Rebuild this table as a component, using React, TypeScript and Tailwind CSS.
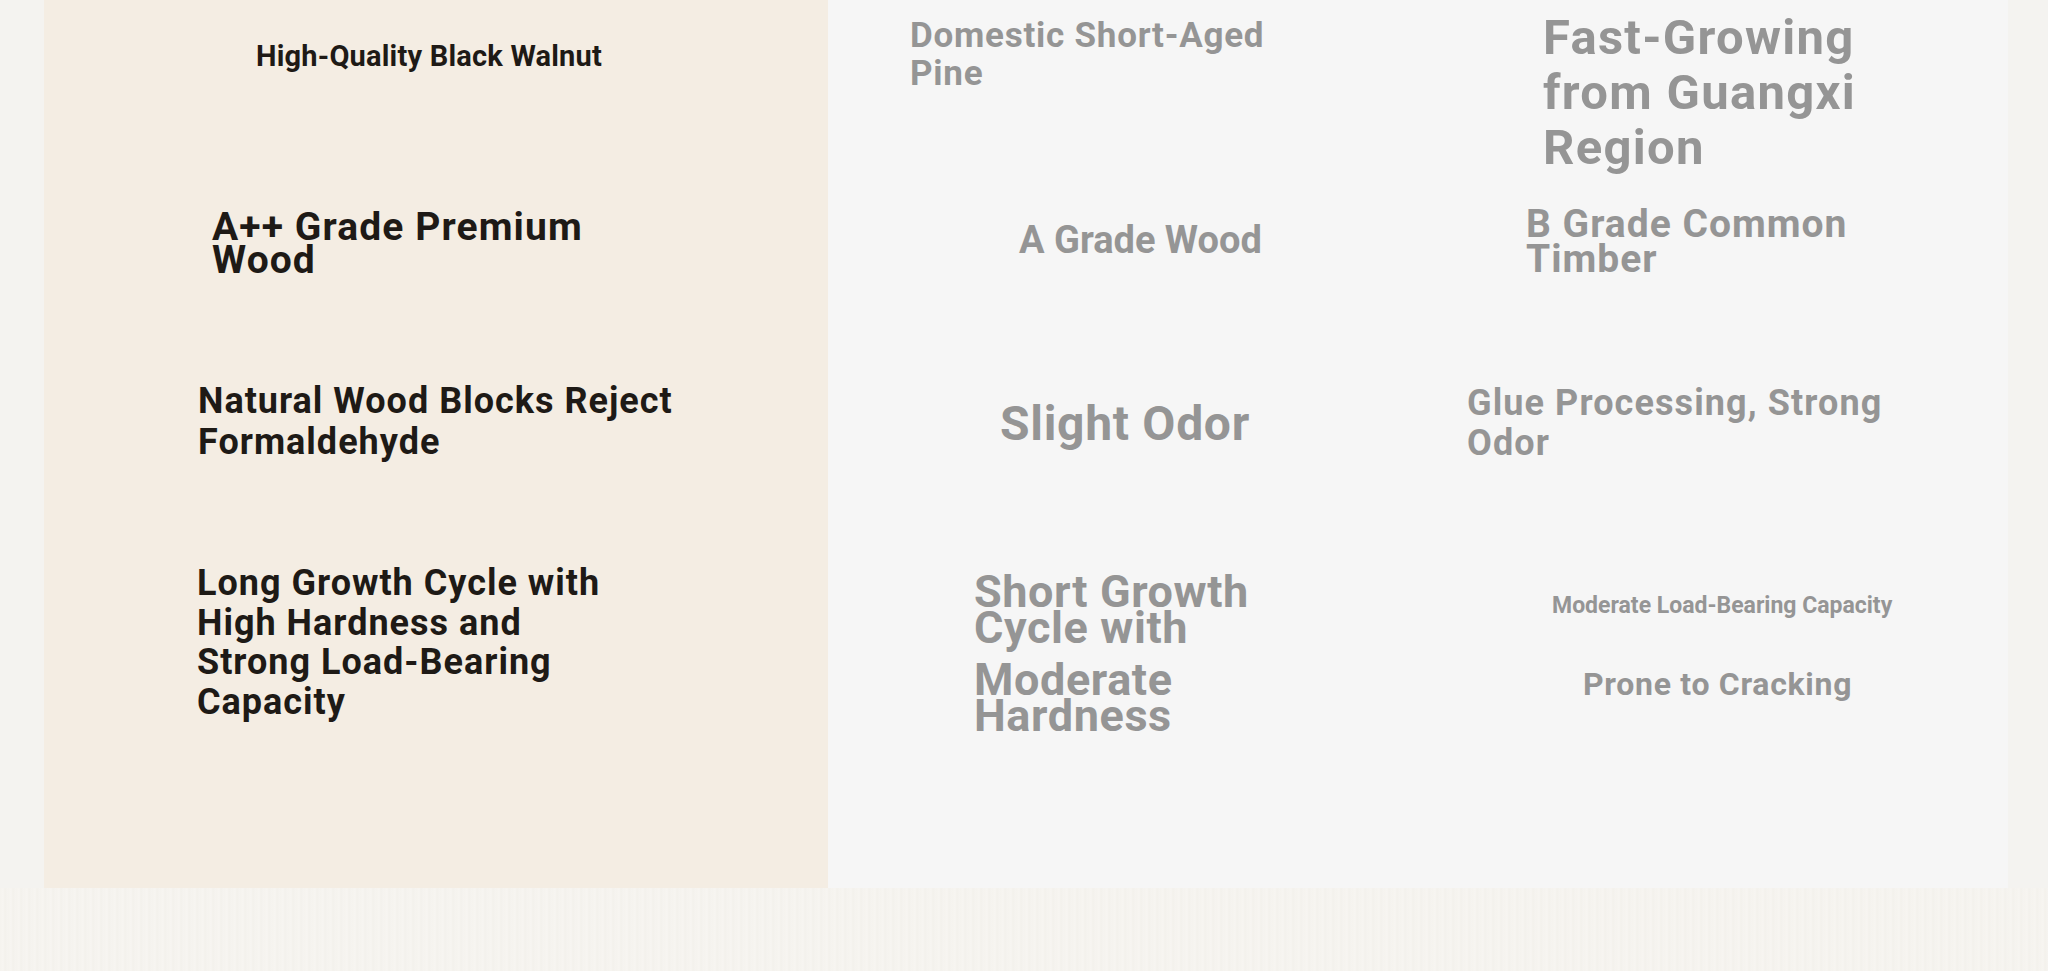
export default function App() {
  return (
    <div className="min-h-[971px] w-full overflow-hidden bg-[#f4f3f0] font-['Roboto',sans-serif] font-bold">
      <div className="ml-[44px] grid h-[888px] w-[1964px] grid-cols-[784px_592px_588px] grid-rows-[185px_145px_190px_368px]">
        {/* Row 1 */}
        <div className="bg-[#f4ede3] pl-[212px] pt-[39px]">
          <p className="text-[29px] leading-[35px] tracking-[0.2px] text-[#1e1a16]">High-Quality Black Walnut</p>
        </div>
        <div className="bg-[#f6f6f6] pl-[82px] pt-[17px]">
          <p className="w-[390px] text-[35px] leading-[38px] tracking-[0.75px] text-[#959595]">Domestic Short-Aged Pine</p>
        </div>
        <div className="bg-[#f6f6f6] pl-[123px] pt-[10px]">
          <p className="w-[340px] text-[49px] leading-[55px] tracking-[1.3px] text-[#959595]">Fast-Growing from Guangxi Region</p>
        </div>

        {/* Row 2 */}
        <div className="bg-[#f4ede3] pl-[168px] pt-[26px]">
          <p className="w-[410px] text-[39px] leading-[33px] tracking-[1.1px] text-[#1e1a16]">A++ Grade Premium Wood</p>
        </div>
        <div className="bg-[#f6f6f6] pl-[191px] pt-[33px]">
          <p className="text-[38px] leading-[1.2] text-[#959595]">A Grade Wood</p>
        </div>
        <div className="bg-[#f6f6f6] pl-[106px] pt-[22px]">
          <p className="w-[360px] text-[39px] leading-[35px] tracking-[1px] text-[#959595]">B Grade Common Timber</p>
        </div>

        {/* Row 3 */}
        <div className="bg-[#f4ede3] pl-[154px] pt-[51px]">
          <p className="w-[510px] text-[36px] leading-[41px] tracking-[1px] text-[#1e1a16]">Natural Wood Blocks Reject Formaldehyde</p>
        </div>
        <div className="bg-[#f6f6f6] pl-[172px] pt-[65px]">
          <p className="text-[48px] leading-[1.2] tracking-[0.7px] text-[#959595]">Slight Odor</p>
        </div>
        <div className="bg-[#f6f6f6] pl-[47px] pt-[53px]">
          <p className="w-[450px] text-[36px] leading-[40px] tracking-[1.1px] text-[#959595]">Glue Processing, Strong Odor</p>
        </div>

        {/* Row 4 */}
        <div className="bg-[#f4ede3] pl-[153px] pt-[44px]">
          <p className="w-[430px] text-[36px] leading-[39.5px] tracking-[1px] text-[#1e1a16]">
            Long Growth Cycle with High Hardness and Strong Load-Bearing Capacity
          </p>
        </div>
        <div className="bg-[#f6f6f6] pl-[146px] pt-[54px] text-[#959595]">
          <p className="w-[295px] text-[45px] leading-[36px] tracking-[0.6px]">Short Growth Cycle with</p>
          <p className="mt-[16px] w-[295px] text-[45px] leading-[36px] tracking-[0.6px]">Moderate Hardness</p>
        </div>
        <div className="bg-[#f6f6f6] pl-[132px] pt-[72px] text-[#959595]">
          <p className="text-[23px] leading-[1.2]">Moderate Load-Bearing Capacity</p>
          <p className="mt-[45px] pl-[31px] text-[32px] leading-[1.2] tracking-[0.7px]">Prone to Cracking</p>
        </div>
      </div>
      {/* textured strip below the table */}
      <div className="h-[83px] w-full bg-[repeating-linear-gradient(90deg,#f5f3ee_0px,#f7f5f1_3px,#f3f1ec_5px,#f6f4f0_8px)]" />
    </div>
  )
}
